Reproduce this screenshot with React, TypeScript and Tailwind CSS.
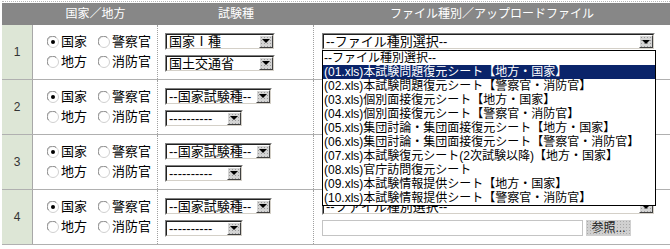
import React from 'react';

const FONT = "font-['Liberation_Sans','Noto_Sans_CJK_JP',sans-serif]";

const FILE_TYPES = [
  '--ファイル種別選択--',
  '(01.xls)本試験問題復元シート【地方・国家】',
  '(02.xls)本試験問題復元シート【警察官・消防官】',
  '(03.xls)個別面接復元シート【地方・国家】',
  '(04.xls)個別面接復元シート【警察官・消防官】',
  '(05.xls)集団討論・集団面接復元シート【地方・国家】',
  '(06.xls)集団討論・集団面接復元シート【警察官・消防官】',
  '(07.xls)本試験復元シート(2次試験以降)【地方・国家】',
  '(08.xls)官庁訪問復元シート',
  '(09.xls)本試験情報提供シート【地方・国家】',
  '(10.xls)本試験情報提供シート【警察官・消防官】',
];

const ROWS = [
  { no: 1, kind: '国家Ⅰ種', sub: '国土交通省', wide: true, open: true },
  { no: 2, kind: '--国家試験種--', sub: '----------', wide: false, open: false },
  { no: 3, kind: '--国家試験種--', sub: '----------', wide: false, open: false },
  { no: 4, kind: '--国家試験種--', sub: '----------', wide: false, open: false },
];

function Radio({ checked }: { checked?: boolean }) {
  return (
    <svg width="12" height="12" viewBox="0 0 12 12" className="shrink-0">
      <circle cx="6" cy="6" r="5.5" fill="#fff" stroke="#d0d0d0" />
      <path d="M1.6 9.2 A4.8 4.8 0 0 1 9.2 1.6" fill="none" stroke="#808080" strokeWidth="1" />
      {checked && <circle cx="6" cy="6" r="2" fill="#000" />}
    </svg>
  );
}

function Select({ className, text }: { className: string; text: string }) {
  return (
    <div className={`flex h-[17px] border border-t-[#808080] border-l-[#808080] border-b-white border-r-white ${className}`}>
      <div className="flex flex-1 items-center border border-t-[#202020] border-l-[#202020] border-b-[#d4d0c8] border-r-[#d4d0c8] bg-white">
        <span className="flex-1 overflow-hidden whitespace-nowrap pl-[2px] text-[13px] leading-[13px] text-black">{text}</span>
        <div className="flex h-[13px] w-[14px] items-center justify-center border border-t-white border-l-white border-b-[#404040] border-r-[#404040] bg-[#d4d4d4] bg-[radial-gradient(#9a9a9a_0.6px,transparent_0.7px)] bg-[length:3px_3px]">
          <div className="h-0 w-0 border-x-[4px] border-x-transparent border-t-[4px] border-t-black" />
        </div>
      </div>
    </div>
  );
}

function FileList() {
  return (
    <div className="absolute left-0 top-[17px] z-10 w-[334px] border border-black bg-white">
      {FILE_TYPES.map((t, i) => (
        <div
          key={i}
          className={`h-[14px] whitespace-nowrap pl-px text-[12px] leading-[14px] ${i === 1 ? 'bg-[#0a246a] text-white' : 'text-black'}`}
        >
          {t}
        </div>
      ))}
    </div>
  );
}

export default function App() {
  return (
    <div className={`h-[249px] w-[670px] overflow-hidden bg-white pt-px ${FONT}`}>
      <div className="ml-[2px] border-t border-dotted border-[#b8b8b8]" />
      <div className="ml-[2px] mt-px grid h-[22px] grid-cols-[31px_125px_156px_1fr] bg-[#878787] text-[12px] text-white">
        <div />
        <div className="flex items-center justify-center">国家／地方</div>
        <div className="flex items-center justify-center">試験種</div>
        <div className="flex items-center justify-center">ファイル種別／アップロードファイル</div>
      </div>
      {ROWS.map((r) => (
        <div key={r.no} className="ml-[2px] grid h-[55px] grid-cols-[31px_125px_156px_1fr] border-b border-[#b0b0b0]">
          <div className="flex items-center justify-center border-r border-[#a8a8a8] bg-[#dde6d6] text-[12px] text-[#333]">
            {r.no}
          </div>
          <div className="flex items-center border-r border-dotted border-[#a0a0a0] pl-[14px]">
            <div className="grid grid-cols-[51px_auto] text-[13px] leading-[20px] text-black">
              <label className="flex items-center gap-[2px]"><Radio checked />国家</label>
              <label className="flex items-center gap-[2px]"><Radio />警察官</label>
              <label className="flex items-center gap-[2px]"><Radio />地方</label>
              <label className="flex items-center gap-[2px]"><Radio />消防官</label>
            </div>
          </div>
          <div className="flex flex-col justify-center gap-[5px] border-r border-dotted border-[#a0a0a0] pl-[7px]">
            <Select className={r.wide ? 'w-[110px]' : 'w-[107px]'} text={r.kind} />
            <Select className={r.wide ? 'w-[110px]' : 'w-[78px]'} text={r.sub} />
          </div>
          <div className="flex items-center pl-[8px]">
            <div className="relative flex flex-col gap-[5px]">
              <Select className="w-[333px]" text="--ファイル種別選択--" />
              {r.open && <FileList />}
              <div className="flex gap-[3px]">
                <div className="h-[16px] w-[261px] border border-[#c4c4c4] bg-white" />
                <div className="flex h-[16px] w-[45px] items-center justify-center bg-[#d0d0d0] bg-[radial-gradient(#a8a8a8_0.6px,transparent_0.7px)] bg-[length:3px_3px] text-[12px] leading-none text-[#222]">
                  参照...
                </div>
              </div>
            </div>
          </div>
        </div>
      ))}
    </div>
  );
}
